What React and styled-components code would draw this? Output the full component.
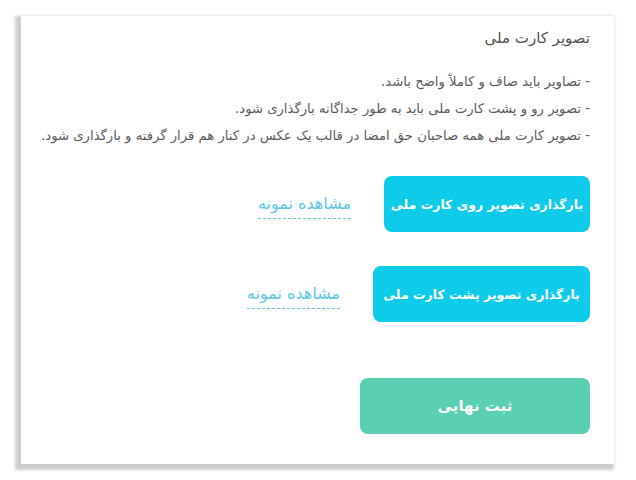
import React from "react";
import styled, { createGlobalStyle } from "styled-components";

const GlobalStyle = createGlobalStyle`
  html, body {
    margin: 0;
    padding: 0;
    background: #fff;
  }
  body {
    font-family: "DejaVu Sans", "Noto Sans", sans-serif;
  }
`;

const Page = styled.div`
  width: 636px;
  height: 480px;
  padding: 16px 0 0 21px;
  box-sizing: border-box;
`;

const Card = styled.div`
  width: 593px;
  height: 448px;
  box-sizing: border-box;
  background: #fff;
  box-shadow: -3px 3px 3px 3px rgba(0, 0, 0, 0.2);
  padding: 12px 24px 0 24px;
  direction: rtl;
  display: flex;
  flex-direction: column;
`;

const Title = styled.h3`
  margin: 0;
  font-size: 15px;
  font-weight: normal;
  color: #505050;
  line-height: 20px;
`;

const Notes = styled.ul`
  list-style: none;
  margin: 24px 0 0;
  padding: 0;
  display: flex;
  flex-direction: column;
  gap: 8px;
  li {
    font-size: 13.2px;
    color: #5a5a5a;
    line-height: 19px;
    white-space: nowrap;
  }
`;

const UploadList = styled.div`
  margin-top: 31px;
  display: flex;
  flex-direction: column;
  gap: 34px;
`;

const UploadRow = styled.div`
  display: flex;
  align-items: center;
  gap: 33px;
`;

const Button = styled.button`
  height: 56px;
  width: ${(p) => p.$width}px;
  border: none;
  border-radius: 8px;
  background: ${(p) => p.$bg};
  color: #fff;
  font-family: "DejaVu Sans", sans-serif;
  font-weight: bold;
  font-size: ${(p) => p.$size || 12.5}px;
  padding: 0;
  cursor: pointer;
  white-space: nowrap;
`;

const SampleLink = styled.a`
  color: #5ec7e4;
  font-size: 16px;
  line-height: 20px;
  text-decoration: none;
  border-bottom: 1px dashed #5ec7e4;
  padding-bottom: 4px;
  margin-top: 4px;
  cursor: pointer;
`;

const Footer = styled.div`
  margin-top: 56px;
  display: flex;
`;

const uploads = [
  { label: "بارگذاری تصویر روی کارت ملی", width: 206 },
  { label: "بارگذاری تصویر پشت کارت ملی", width: 217 },
];

export default function App() {
  return (
    <>
      <GlobalStyle />
      <Page>
        <Card>
          <Title>تصویر کارت ملی</Title>
          <Notes>
            <li>- تصاویر باید صاف و کاملاً واضح باشد.</li>
            <li>- تصویر رو و پشت کارت ملی باید به طور جداگانه بارگذاری شود.</li>
            <li>
              - تصویر کارت ملی همه صاحبان حق امضا در قالب یک عکس در کنار هم قرار
              گرفته و بارگذاری شود.
            </li>
          </Notes>
          <UploadList>
            {uploads.map((u) => (
              <UploadRow key={u.label}>
                <Button $bg="#0fcbea" $width={u.width}>
                  {u.label}
                </Button>
                <SampleLink>مشاهده نمونه</SampleLink>
              </UploadRow>
            ))}
          </UploadList>
          <Footer>
            <Button $bg="#5bcfb1" $width={230} $size={15}>
              ثبت نهایی
            </Button>
          </Footer>
        </Card>
      </Page>
    </>
  );
}
